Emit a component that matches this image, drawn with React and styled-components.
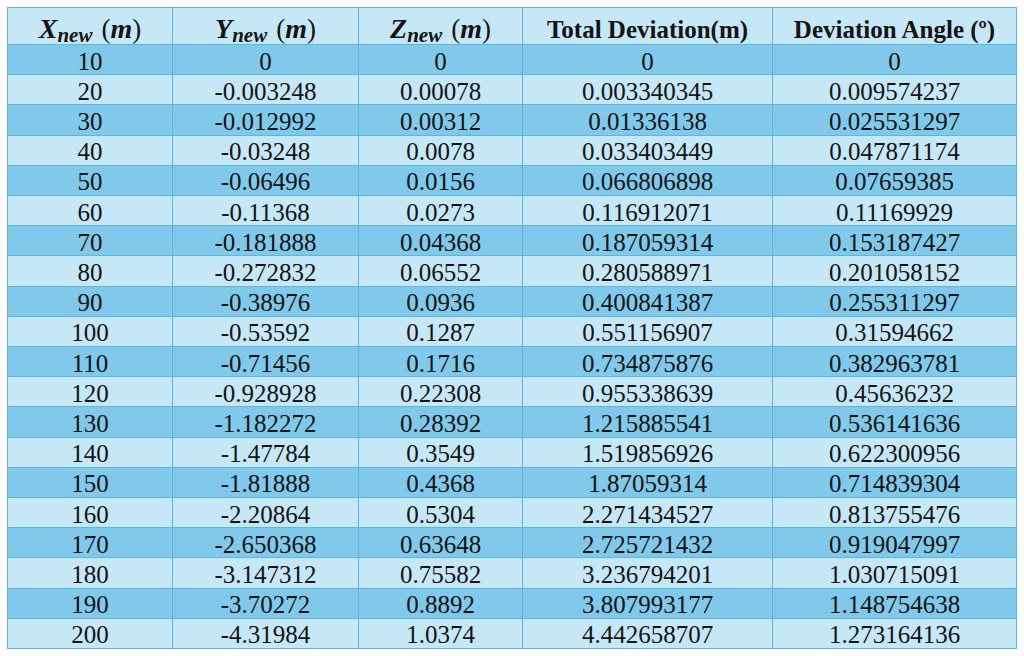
import styled, { createGlobalStyle } from 'styled-components';

const GlobalStyle = createGlobalStyle`
  html, body {
    margin: 0;
    padding: 0;
    background: #ffffff;
  }
  body {
    font-family: "Liberation Serif", "Times New Roman", serif;
  }
`;

const Page = styled.div`
  width: 1024px;
  height: 656px;
  padding: 7px 0 0 7px;
  box-sizing: border-box;
`;

const Table = styled.div`
  display: grid;
  grid-template-columns: 164px 185px 163px 249px 243px;
  grid-template-rows: 36px repeat(20, 1fr);
  gap: 1px;
  padding: 1px;
  width: 1010px;
  height: 642px;
  box-sizing: border-box;
  background: #5bb6e2;
`;

const Row = styled.div`
  display: contents;
`;

const Cell = styled.div`
  display: flex;
  align-items: center;
  justify-content: center;
  background: ${(p) => (p.$dark ? '#80c9ea' : '#c6e7f5')};
  color: #141414;
  font-family: "Liberation Serif", "Times New Roman", serif;
  font-size: 25px;
  line-height: 1;
  padding-top: 3px;
  white-space: nowrap;
`;

const HeadCell = styled(Cell)`
  font-weight: bold;
  padding-top: 6px;
`;

const MathVar = styled.span`
  font-style: italic;
  font-weight: bold;
  font-size: 28px;
`;

const Sub = styled.span`
  position: relative;
  top: 6px;
  font-style: italic;
  font-weight: bold;
  font-size: 21px;
  margin-right: 9px;
`;

const Paren = styled.span`
  font-weight: normal;
  font-size: 27px;
`;

const rows = [
  ['10', '0', '0', '0', '0'],
  ['20', '-0.003248', '0.00078', '0.003340345', '0.009574237'],
  ['30', '-0.012992', '0.00312', '0.01336138', '0.025531297'],
  ['40', '-0.03248', '0.0078', '0.033403449', '0.047871174'],
  ['50', '-0.06496', '0.0156', '0.066806898', '0.07659385'],
  ['60', '-0.11368', '0.0273', '0.116912071', '0.11169929'],
  ['70', '-0.181888', '0.04368', '0.187059314', '0.153187427'],
  ['80', '-0.272832', '0.06552', '0.280588971', '0.201058152'],
  ['90', '-0.38976', '0.0936', '0.400841387', '0.255311297'],
  ['100', '-0.53592', '0.1287', '0.551156907', '0.31594662'],
  ['110', '-0.71456', '0.1716', '0.734875876', '0.382963781'],
  ['120', '-0.928928', '0.22308', '0.955338639', '0.45636232'],
  ['130', '-1.182272', '0.28392', '1.215885541', '0.536141636'],
  ['140', '-1.47784', '0.3549', '1.519856926', '0.622300956'],
  ['150', '-1.81888', '0.4368', '1.87059314', '0.714839304'],
  ['160', '-2.20864', '0.5304', '2.271434527', '0.813755476'],
  ['170', '-2.650368', '0.63648', '2.725721432', '0.919047997'],
  ['180', '-3.147312', '0.75582', '3.236794201', '1.030715091'],
  ['190', '-3.70272', '0.8892', '3.807993177', '1.148754638'],
  ['200', '-4.31984', '1.0374', '4.442658707', '1.273164136'],
];

function Coord({ name }) {
  return (
    <>
      <MathVar>{name}</MathVar>
      <Sub>new</Sub>
      <Paren>(</Paren>
      <MathVar>m</MathVar>
      <Paren>)</Paren>
    </>
  );
}

export default function App() {
  return (
    <>
      <GlobalStyle />
      <Page>
        <Table>
          <Row>
            <HeadCell><Coord name="X" /></HeadCell>
            <HeadCell><Coord name="Y" /></HeadCell>
            <HeadCell><Coord name="Z" /></HeadCell>
            <HeadCell>Total Deviation(m)</HeadCell>
            <HeadCell>Deviation Angle (º)</HeadCell>
          </Row>
          {rows.map((r, i) => (
            <Row key={r[0]}>
              {r.map((v, j) => (
                <Cell key={j} $dark={i % 2 === 0}>{v}</Cell>
              ))}
            </Row>
          ))}
        </Table>
      </Page>
    </>
  );
}
